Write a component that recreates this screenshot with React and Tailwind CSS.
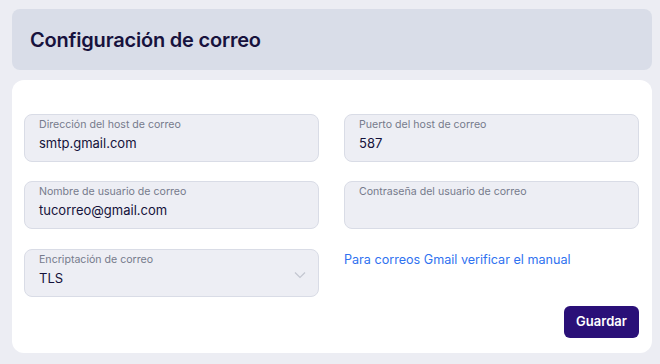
const fieldBox =
  "h-12 rounded-lg border border-[#d9dce6] bg-[#edeef4] pl-[14px] pr-3 pt-[3px]";

const Field = ({ label, value }) => (
  <div className={fieldBox}>
    <div className="text-[10.6px] leading-[14px] text-[#767b8c]">{label}</div>
    <div className="mt-[2px] text-[13px] leading-[18px] text-[#14123a]">{value}</div>
  </div>
);

const App = () => {
  return (
    <div
      className="h-[364px] w-[660px] bg-[#ecedf3] pl-3 pr-2 pt-[9px]"
      style={{ fontFamily: "Inter, 'Noto Sans', sans-serif" }}
    >
      <div className="flex h-[61px] items-center rounded-lg bg-[#d9dde8] px-[18px]">
        <h1 className="text-[20px] font-semibold tracking-[-0.2px] text-[#17123d]">
          Configuración de correo
        </h1>
      </div>

      <div className="mt-[10px] h-[273px] rounded-xl bg-white pl-3 pr-[13px] pt-[34px]">
        <div className="grid grid-cols-2 gap-x-[25px] gap-y-[19px]">
          <Field label="Dirección del host de correo" value="smtp.gmail.com" />
          <Field label="Puerto del host de correo" value="587" />
          <Field label="Nombre de usuario de correo" value="tucorreo@gmail.com" />
          <Field label="Contraseña del usuario de correo" value="" />

          {/* select */}
          <div className={fieldBox + " relative mt-[1px]"}>
            <div className="text-[10.6px] leading-[14px] text-[#767b8c]">
              Encriptación de correo
            </div>
            <div className="mt-[2px] text-[13px] leading-[18px] text-[#14123a]">TLS</div>
            <svg
              className="absolute right-[12px] top-[21px]"
              width="12"
              height="8"
              viewBox="0 0 12 8"
              fill="none"
            >
              <path d="M1 1.5l5 5 5-5" stroke="#c3c6d0" strokeWidth="1.2" />
            </svg>
          </div>

          <div className="-mt-[2px]">
            <a href="#" className="text-[12.6px] text-[#2f72f0]">
              Para correos Gmail verificar el manual
            </a>
          </div>
        </div>

        <div className="mt-[9px] flex justify-end">
          <button className="h-8 w-[75px] rounded-md bg-[#2a1078] text-[13px] font-semibold text-white">
            Guardar
          </button>
        </div>
      </div>
    </div>
  );
};

export default App;
